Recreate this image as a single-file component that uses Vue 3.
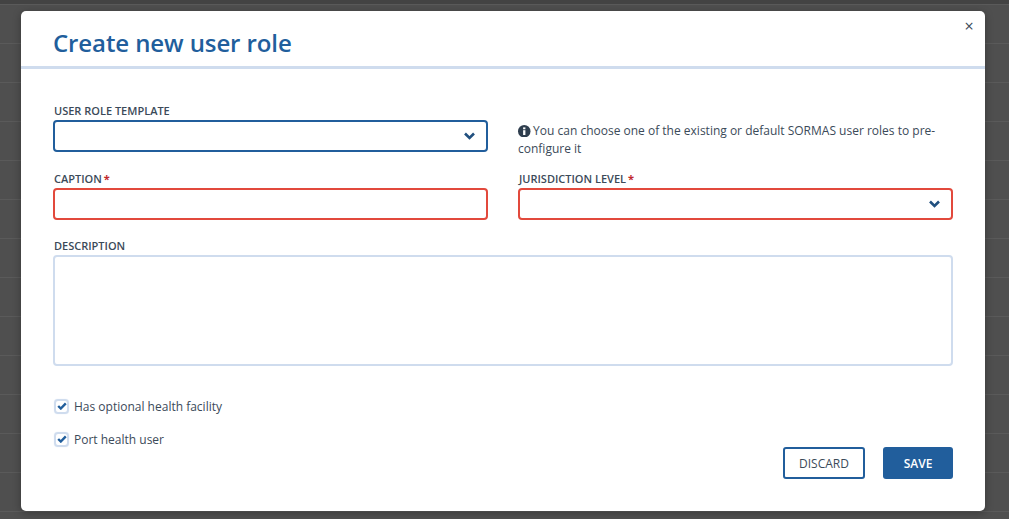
<script setup>
const checks = ['Has optional health facility', 'Port health user']
</script>

<template>
  <div class="page">
    <section class="modal">
      <button class="close" aria-label="Close">×</button>
      <header class="head"><h1>Create new user role</h1></header>
      <div class="body">
        <div class="row r1">
          <div class="field">
            <label>User role template</label>
            <div class="input focus">
              <svg class="chev" viewBox="0 0 12 8"><path d="M1.5 1.5 6 6l4.5-4.5" /></svg>
            </div>
          </div>
          <p class="hint">
            <svg class="info" viewBox="0 0 12 12"><circle cx="6" cy="6" r="6" fill="#2f3e4e" /><rect x="4.9" y="5" width="2.2" height="4.6" fill="#fff" /><rect x="4.9" y="2.3" width="2.2" height="1.8" fill="#fff" /></svg>
            You can choose one of the existing or default SORMAS user roles to pre-configure it
          </p>
        </div>
        <div class="row r2">
          <div class="field">
            <label>Caption <b>*</b></label>
            <div class="input error"></div>
          </div>
          <div class="field">
            <label>Jurisdiction level <b>*</b></label>
            <div class="input error">
              <svg class="chev" viewBox="0 0 12 8"><path d="M1.5 1.5 6 6l4.5-4.5" /></svg>
            </div>
          </div>
        </div>
        <div class="field desc">
          <label>Description</label>
          <div class="area"></div>
        </div>
        <div class="foot">
          <div class="checks">
            <div v-for="c in checks" :key="c" class="check">
              <span class="box">
                <svg viewBox="0 0 10 8"><path d="M1.2 4 3.8 6.5 8.8 1.3" /></svg>
              </span>
              <span>{{ c }}</span>
            </div>
          </div>
          <div class="actions">
            <button class="btn ghost">DISCARD</button>
            <button class="btn solid">SAVE</button>
          </div>
        </div>
      </div>
    </section>
  </div>
</template>

<style scoped>
.page {
  width: 1009px;
  height: 519px;
  box-sizing: border-box;
  padding: 11px 24px 8px 21px;
  overflow: hidden;
  background-color: #4f4f4f;
  background-image: linear-gradient(#434343 0, #434343 4px, transparent 4px), repeating-linear-gradient(to bottom, #5a5a5a 0, #5a5a5a 1px, transparent 1px, transparent 39px);
  background-position: 0 0, 0 4px;
  font-family: "Open Sans", sans-serif;
  color: #3b4a59;
}
.modal {
  position: relative;
  height: 500px;
  background: #fff;
  border-radius: 5px;
  box-shadow: 0 2px 8px rgba(0, 0, 0, 0.3);
  display: flex;
  flex-direction: column;
}
.close {
  position: absolute;
  top: 7px;
  right: 10px;
  width: 12px;
  height: 16px;
  padding: 0;
  border: 0;
  background: none;
  color: #3b4a59;
  font: 500 16px/16px "Open Sans", sans-serif;
}
.head {
  height: 55px;
  border-bottom: 3px solid #cfdcee;
  padding-left: 32px;
}
h1 {
  margin: 0;
  padding-top: 15px;
  font-size: 24px;
  line-height: 33px;
  font-weight: 600;
  letter-spacing: -0.1px;
  color: #215e9c;
}
.body {
  flex: 1;
  padding: 35px 32px 0;
  display: flex;
  flex-direction: column;
}
.row {
  display: grid;
  grid-template-columns: 435px 435px;
  column-gap: 30px;
}
.r2 {
  margin-top: 14px;
}
label {
  display: block;
  height: 16px;
  font-size: 11px;
  line-height: 14px;
  font-weight: 600;
  text-transform: uppercase;
  color: #3b4a59;
  padding-left: 1px;
}
label b {
  color: #c0272d;
  font-weight: 700;
  margin-left: -1px;
}
.input {
  height: 32px;
  box-sizing: border-box;
  border: 2px solid #cfdcee;
  border-radius: 4px;
  display: flex;
  align-items: center;
  justify-content: flex-end;
  padding-right: 10px;
}
.focus {
  border-color: #215e9c;
}
.error {
  border-color: #e2493c;
}
.chev {
  width: 13px;
  height: 8px;
  fill: none;
  stroke: #21507f;
  stroke-width: 2.6;
}
.hint {
  margin: 18px 0 0;
  font-size: 12px;
  line-height: 18px;
  color: #3b4a59;
}
.info {
  width: 12.5px;
  height: 12.5px;
  margin-right: -0.5px;
  vertical-align: -2px;
}
.desc {
  margin-top: 19px;
}
.area {
  height: 111px;
  box-sizing: border-box;
  border: 2px solid #cfdcee;
  border-radius: 4px;
}
.foot {
  display: flex;
  justify-content: space-between;
  align-items: flex-end;
  margin-top: 31px;
}
.checks {
  display: flex;
  flex-direction: column;
  gap: 15px;
}
.check {
  display: flex;
  align-items: center;
  gap: 5px;
  height: 18px;
  font-size: 12px;
}
.box {
  width: 15px;
  height: 15px;
  margin-left: 1px;
  box-sizing: border-box;
  border: 2px solid #cfdcee;
  border-radius: 4px;
  box-shadow: 0 0 1px #cfdcee;
  display: flex;
  align-items: center;
  justify-content: center;
}
.box svg {
  width: 10px;
  height: 8px;
  fill: none;
  stroke: #215e9c;
  stroke-width: 2.4;
}
.actions {
  display: flex;
  gap: 18px;
  margin-bottom: -31px;
}
.btn {
  height: 32px;
  box-sizing: border-box;
  border-radius: 3px;
  font-family: "Open Sans", sans-serif;
  font-size: 12px;
  padding: 0;
}
.ghost {
  width: 82px;
  border: 2px solid #215e9c;
  background: #fff;
  color: #3b4a59;
}
.solid {
  width: 70px;
  border: 0;
  background: #215e9c;
  color: #fff;
  font-weight: 600;
}
</style>
